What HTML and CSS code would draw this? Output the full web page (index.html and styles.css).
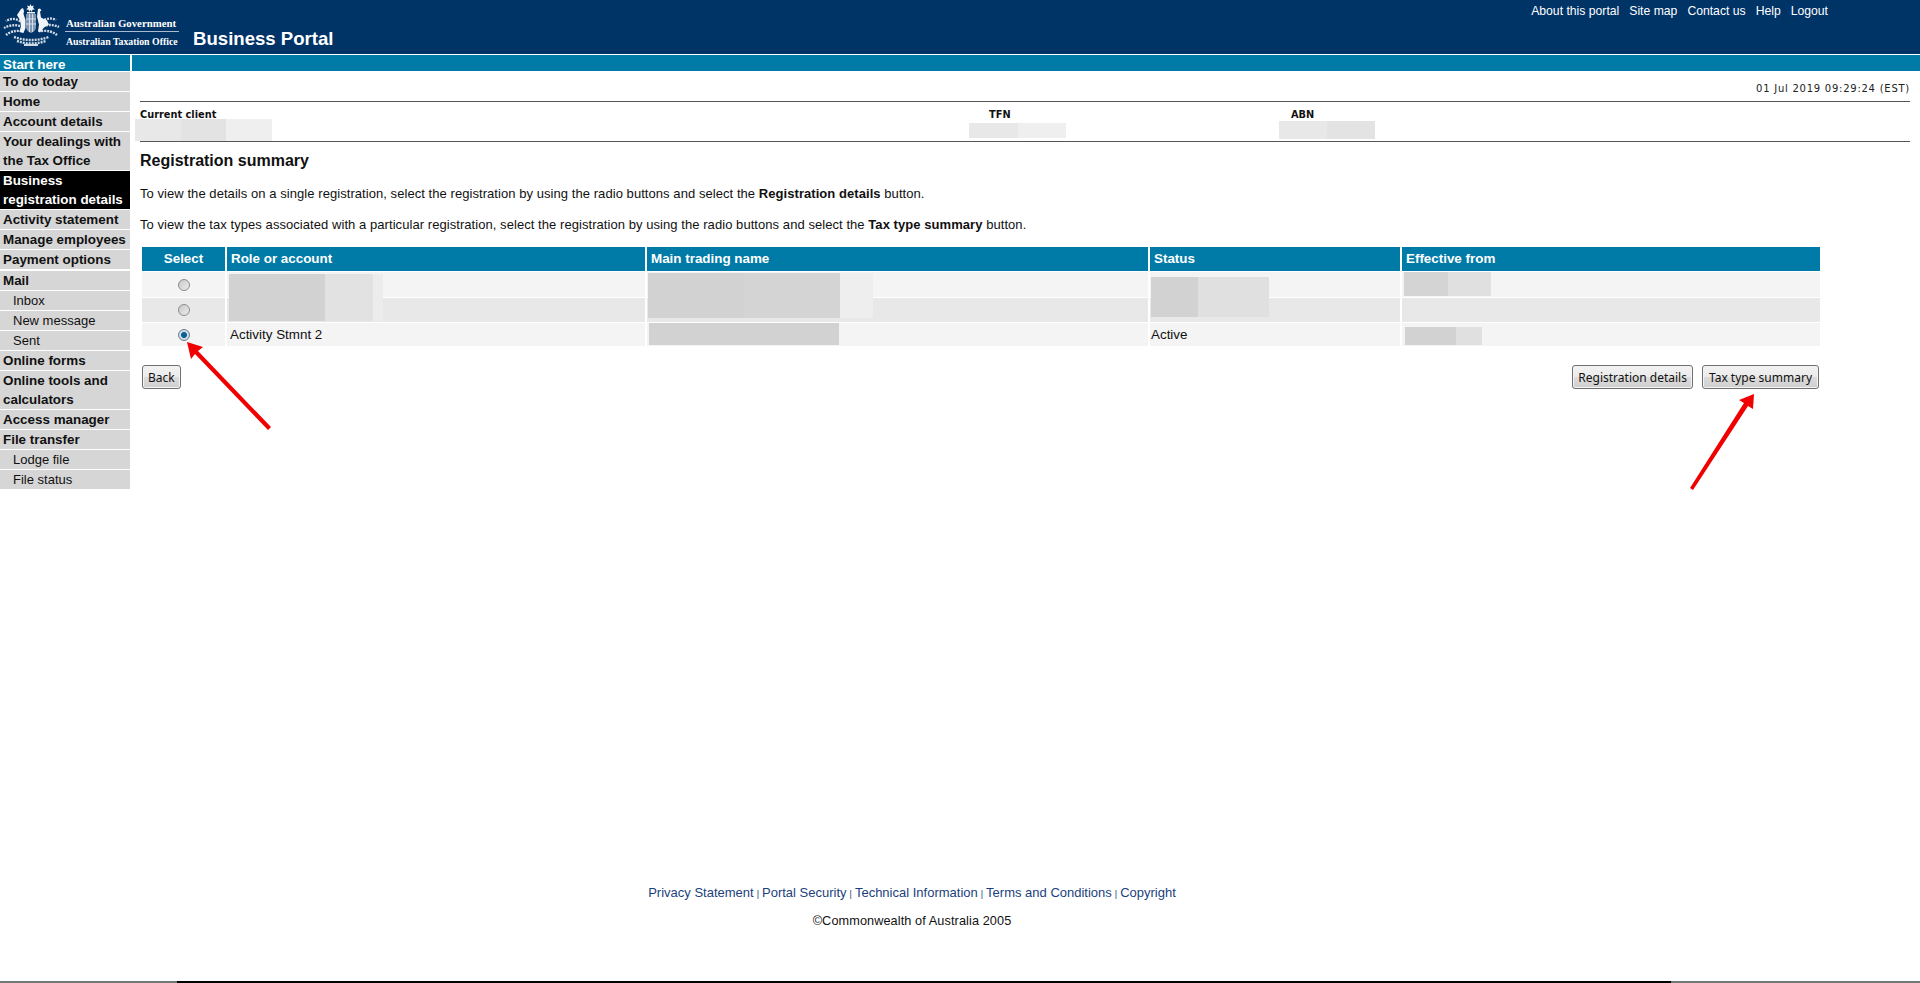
FILE: index.html
```html
<!DOCTYPE html>
<html lang="en">
<head>
<meta charset="utf-8">
<title>Business Portal</title>
<link rel="stylesheet" href="styles.css">
</head>
<body>
<header class="masthead">
  <div class="brand">
    <svg class="arms" viewBox="0 0 62 48" width="62" height="48" aria-hidden="true">
      <g fill="none" stroke="#cfd9e4" stroke-width="2.4" stroke-dasharray="2 1">
        <path d="M20 19Q11 12 3 17"/>
        <path d="M20 23Q10 19 1 24"/>
        <path d="M19 27Q9 26 3 31"/>
        <path d="M36 19Q46 12 53 16"/>
        <path d="M37 23Q47 19 56 23"/>
        <path d="M38 27Q48 26 54 31"/>
        <path d="M11 33Q28 39 46 33"/>
        <path d="M14 37Q28 42 43 37"/>
      </g>
      <g fill="#f2f5f8">
        <path d="M27.5 0l1 2.2 2.4-.6-.9 2.2 1.8 1.6-2.4.3-.5 2.3-1.4-1.9-1.4 1.9-.5-2.3-2.4-.3 1.8-1.6-.9-2.2 2.4.6z"/>
        <rect x="24" y="8" width="8" height="1.5"/>
        <path d="M18 5l2-1 1 3-.5 3 2 6 0 8-2 5-4-1 1.500-6-1-6-3-5z"/>
        <path d="M35 5l2-.5 1.500 2-1.500 1 1 6 6 3 2 4-5 3-4 5-2-1 1-7-2-8z"/>
      </g>
      <path d="M23 10h10v13q0 4-5 6q-5-2-5-6z" fill="#7f97b3"/>
      <path d="M23 15h10M23 20h10M26.500 10v18M29.500 10v18" stroke="#d5dee8" stroke-width="1" fill="none"/>
      <rect x="21" y="40" width="14" height="2" fill="#cfd9e4"/>
    </svg>
    <div class="agency">
      <span class="agency-line agency-gov">Australian Government</span>
      <span class="agency-line agency-ato">Australian Taxation Office</span>
    </div>
    <div class="portal-name">Business Portal</div>
  </div>
  <nav class="top-links">
    <a>About this portal</a><a>Site map</a><a>Contact us</a><a>Help</a><a>Logout</a>
  </nav>
</header>

<div class="page">
  <aside class="sidebar">
    <div class="start">Start here</div>
    <ul class="menu">
      <li>To do today</li>
      <li>Home</li>
      <li>Account details</li>
      <li>Your dealings with the Tax Office</li>
      <li class="current">Business registration details</li>
      <li>Activity statement</li>
      <li>Manage employees</li>
      <li class="nudge">Payment options</li>
      <li>Mail</li>
      <li class="sub">Inbox</li>
      <li class="sub">New message</li>
      <li class="sub">Sent</li>
      <li>Online forms</li>
      <li>Online tools and calculators</li>
      <li>Access manager</li>
      <li>File transfer</li>
      <li class="sub">Lodge file</li>
      <li class="sub">File status</li>
    </ul>
  </aside>

  <main class="content">
    <div class="teal-bar"></div>
    <div class="inner">
      <div class="timestamp">01 Jul 2019 09:29:24 (EST)</div>
      <div class="client">
        <div class="client-col col-client">
          <div class="client-label">Current client</div>
          <div class="blur blur-client"><i class="s2"></i><i class="s1"></i><i class="s3"></i></div>
        </div>
        <div class="client-col col-tfn">
          <div class="client-label">TFN</div>
          <div class="blur blur-tfn"><i class="s2"></i><i class="s3"></i></div>
        </div>
        <div class="client-col col-abn">
          <div class="client-label">ABN</div>
          <div class="blur blur-abn"><i class="s2"></i><i class="s1"></i></div>
        </div>
      </div>
      <h1 class="title">Registration summary</h1>
      <p class="intro">To view the details on a single registration, select the registration by using the radio buttons and select the <b>Registration details</b> button.</p>
      <p class="intro">To view the tax types associated with a particular registration, select the registration by using the radio buttons and select the <b>Tax type summary</b> button.</p>

      <div class="grid">
        <div class="hd center">Select</div>
        <div class="hd">Role or account</div>
        <div class="hd">Main trading name</div>
        <div class="hd">Status</div>
        <div class="hd">Effective from</div>

        <div class="cell odd center"><span class="radio"></span></div>
        <div class="cell odd"></div>
        <div class="cell odd"></div>
        <div class="cell odd"></div>
        <div class="cell odd"></div>

        <div class="cell even center"><span class="radio"></span></div>
        <div class="cell even"></div>
        <div class="cell even"></div>
        <div class="cell even"></div>
        <div class="cell even"></div>

        <div class="cell odd center"><span class="radio on"></span></div>
        <div class="cell odd">Activity Stmnt 2</div>
        <div class="cell odd"></div>
        <div class="cell odd status">Active</div>
        <div class="cell odd"></div>
      </div>

      <div class="actions">
        <button class="btn" type="button">Back</button>
        <div class="actions-right">
          <button class="btn" type="button">Registration details</button>
          <button class="btn btn-wide" type="button">Tax type summary</button>
        </div>
      </div>
    </div>

    <footer class="footer">
      <div class="footer-links">
        <a>Privacy Statement</a><span class="sep">|</span><a>Portal Security</a><span class="sep">|</span><a>Technical Information</a><span class="sep">|</span><a>Terms and Conditions</a><span class="sep">|</span><a>Copyright</a>
      </div>
      <div class="copy">©Commonwealth of Australia 2005</div>
    </footer>
  </main>
</div>

<!-- redaction patches and annotation arrows lie over the page -->
<div class="patch p1"><i class="g1"></i><i class="g2"></i><i class="g3"></i></div>
<div class="patch p2"><i class="g1"></i><i class="g4"></i><i class="g5"></i></div>
<div class="patch p3"><i class="g1"></i><i class="g6"></i></div>
<div class="patch p4"><i class="g7"></i><i class="g8"></i></div>
<div class="patch p5"><i class="g1"></i></div>
<div class="patch p6"><i class="g1"></i><i class="g8"></i></div>

<svg class="arrows" width="1920" height="983" viewBox="0 0 1920 983" aria-hidden="true">
  <g fill="#f00000">
    <path d="M187 342l16 5-5 4 73 76-3 3-73-76-4 5z"/>
    <path d="M1754 394l-1 15-5-3-55 84-3-2 54-85-5-3z"/>
  </g>
</svg>

<div class="screen-edge"></div>
</body>
</html>
```
FILE: styles.css
```css
* { box-sizing: border-box; }
html, body { margin: 0; padding: 0; }
body {
  background: #fff;
  color: #111;
  font-family: "Liberation Sans", Arial, sans-serif;
  font-size: 12px;
  height: 983px;
  overflow: hidden;
  position: relative;
}

/* masthead */
.masthead {
  height: 54px;
  background: #003366;
  display: flex;
  justify-content: space-between;
  color: #fff;
}
.brand { display: flex; align-items: flex-start; padding: 4px 0 0 3px; }
.arms { flex: none; }
.agency {
  margin: 12px 0 0 0;
  width: 114px;
  font-family: "Liberation Serif", "Times New Roman", serif;
  font-weight: bold;
  line-height: 14px;
  display: flex;
  flex-direction: column;
}
.agency-line { white-space: nowrap; height: 15px; padding-left: 1px; }
.agency-gov { font-size: 10.8px; border-bottom: 1px solid #a9bbd0; height: 16px; margin-bottom: 3px; }
.agency-ato { font-size: 9.8px; }
.portal-name {
  margin: 24px 0 0 14px;
  font-size: 18.6px;
  line-height: 22px;
  font-weight: bold;
  white-space: nowrap;
}
.top-links {
  display: flex;
  gap: 10px;
  padding: 4px 92px 0 0;
  font-size: 12.2px;
  line-height: 14px;
}

/* layout */
.page {
  display: flex;
  margin-top: 1px;
  align-items: flex-start;
}

/* sidebar */
.sidebar { width: 130px; flex: none; margin-right: 2px; }
.start {
  height: 16px;
  background: #007ba7;
  color: #fff;
  font-weight: bold;
  font-size: 13.4px;
  line-height: 19px;
  padding-left: 3px;
  margin-bottom: 1px;
  overflow: hidden;
}
.menu { list-style: none; margin: 0; padding: 0; }
.menu li {
  background: #d6d6d6;
  color: #111;
  font-weight: bold;
  font-size: 13.4px;
  line-height: 19px;
  padding: 0 0 0 3px;
  margin-bottom: 1px;
}
.menu li.current { background: #000; color: #fff; }
.menu li.sub { font-weight: normal; font-size: 13px; padding-left: 13px; }
.menu li.nudge { margin-bottom: 2px; }

/* main */
.content {
  flex: 1;
  min-width: 0;
  display: flex;
  flex-direction: column;
  height: 928px;
}
.teal-bar { height: 16px; background: #007ba7; flex: none; }
.inner { padding: 0 10px 0 8px; flex: 1; }
.timestamp {
  font-family: "DejaVu Sans", Verdana, sans-serif;
  font-size: 10px;
  letter-spacing: 0.75px;
  line-height: 12px;
  text-align: right;
  padding-top: 12px;
  height: 30px;
  color: #222;
}
.client {
  border-top: 1px solid #555;
  border-bottom: 1px solid #555;
  height: 41px;
  display: flex;
  font-family: "DejaVu Sans", Verdana, sans-serif;
  font-size: 9.8px;
  font-weight: bold;
}
.client-col { flex: none; }
.col-client { width: 832px; }
.col-tfn { width: 307px; padding-left: 17px; }
.col-abn { padding-left: 12px; }
.client-label { line-height: 12px; padding-top: 7px; height: 17px; color: #111; }
.blur { display: flex; }
.blur i { display: block; height: 100%; flex: 1; }
.blur i.s1 { background: #e3e3e3; }
.blur i.s2 { background: #e8e8e8; }
.blur i.s3 { background: #efefef; }
.blur-client { margin-left: -5px; width: 137px; height: 22px; }
.blur-tfn { margin-left: -20px; width: 97px; height: 15px; margin-top: 4px; }
.blur-abn { margin-left: -12px; width: 96px; height: 18px; margin-top: 2px; }

.title {
  font-size: 16px;
  line-height: 18px;
  font-weight: bold;
  margin: 10px 0 17px;
  color: #111;
}
.intro {
  margin: 0 0 17px;
  font-size: 13px;
  line-height: 14px;
  letter-spacing: 0.06px;
}

.grid {
  display: grid;
  grid-template-columns: 83px 418px 501px 250px 418px;
  column-gap: 2px;
  row-gap: 1px;
  margin: -2px 0 0 2px;
  width: 1678px;
  grid-template-rows: 24px 25px 24px 23px;
}
.hd {
  background: #007ba7;
  color: #fff;
  font-weight: bold;
  font-size: 13.4px;
  line-height: 24px;
  padding-left: 4px;
}
.hd.center { text-align: center; padding: 0; }
.cell {
  font-size: 13.4px;
  display: flex;
  align-items: center;
  padding-left: 3px;
  white-space: nowrap;
}
.cell.center { justify-content: center; padding: 0; }
.odd { background: #f4f4f4; }
.even { background: #e8e8e8; }
.status { padding-left: 1px; }

.radio {
  width: 12px;
  height: 12px;
  border-radius: 50%;
  border: 1px solid #8c8c8c;
  background: linear-gradient(135deg, #c8c8c8, #ececec);
  display: block;
}
.radio.on {
  background: radial-gradient(circle, #0a5f94 0 36%, #cfdde6 48% 62%, #b4bcc4 100%);
  border-color: #707f8c;
}

.actions {
  display: flex;
  justify-content: space-between;
  width: 1678px;
  margin: 19px 0 0 2px;
  padding-right: 1px;
}
.actions-right { display: flex; gap: 9px; }
.btn {
  height: 24px;
  padding: 0 5px;
  font-family: "Noto Sans", Tahoma, sans-serif;
  font-size: 12px;
  color: #111;
  border: 1px solid #707070;
  border-radius: 3px;
  background: linear-gradient(#f2f2f2, #ebebeb 48%, #dcdcdc 52%, #cfcfcf);
  box-shadow: inset 0 0 0 1px #f4f4f4;
}
.btn-wide { padding: 0 6px; }

.footer {
  flex: none;
  text-align: center;
  margin: 0 96px 0 -132px;
  padding-top: 2px;
  height: 100px;
}
.footer-links {
  font-size: 13px;
  line-height: 16px;
  color: #1c3f7e;
}
.sep { font-size: 9px; margin: 0 3px; color: #1c3f7e; }
.copy { margin-top: 11px; font-size: 12.7px; line-height: 16px; letter-spacing: 0.1px; }

/* redaction patches */
.patch { position: absolute; display: flex; }
.patch i { display: block; height: 100%; }
.g1 { background: #d2d2d2; flex: 2; }
.g2 { background: #e2e2e2; flex: 1; }
.g3 { background: #ececec; flex: 0.2; }
.g4 { background: #d4d4d4; flex: 2; }
.g5 { background: #eeeeee; flex: 0.7; }
.g6 { background: #e0e0e0; flex: 3; }
.g7 { background: #d4d4d4; flex: 1; }
.g8 { background: #e0e0e0; flex: 1; }
.p1 { left: 229px; top: 274px; width: 154px; height: 47px; }
.p2 { left: 648px; top: 273px; width: 225px; height: 45px; }
.p3 { left: 1151px; top: 277px; width: 118px; height: 40px; }
.p4 { left: 1404px; top: 272px; width: 87px; height: 24px; }
.p5 { left: 649px; top: 323px; width: 190px; height: 22px; }
.p6 { left: 1405px; top: 327px; width: 77px; height: 18px; }

.arrows { position: absolute; left: 0; top: 0; pointer-events: none; }

.screen-edge {
  position: absolute;
  left: 0; right: 0; bottom: 0;
  height: 2px;
  background: linear-gradient(90deg, #777 0 177px, #000 177px 1671px, #777 1671px);
}
```
